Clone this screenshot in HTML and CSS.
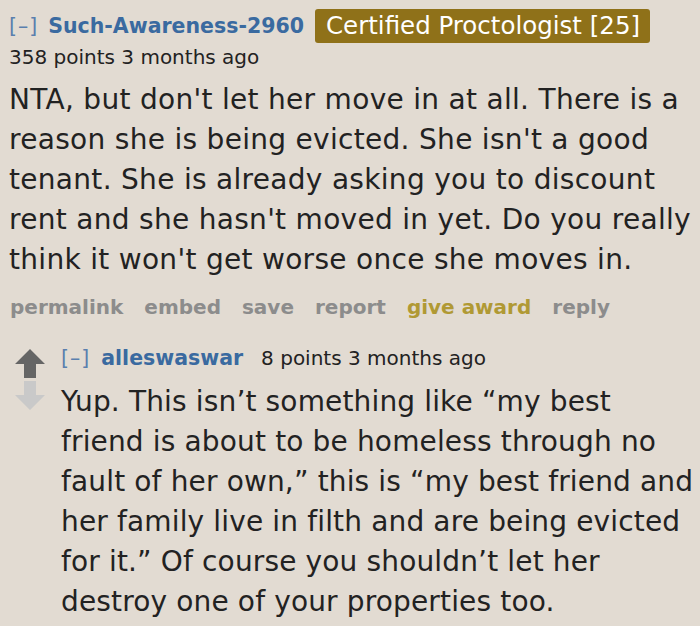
FILE: index.html
```html
<!DOCTYPE html>
<html lang="en">
<head>
    <meta charset="UTF-8">
    <meta name="viewport" content="width=device-width, initial-scale=1.0">
    <title>Comment</title>
    <link rel="stylesheet" href="styles.css">
</head>
<body>
    <div class="comment">
        <div class="tagline">
            <span class="expand">[&ndash;]</span>
            <a class="author" href="#">Such-Awareness-2960</a>
            <span class="flair">Certified Proctologist [25]</span>
        </div>
        <div class="meta">358 points 3 months ago</div>
        <div class="md">
            <p>NTA, but don't let her move in at all. There is a reason she is being evicted. She isn't a good tenant. She is already asking you to discount rent and she hasn't moved in yet. Do you really think it won't get worse once she moves in.</p>
        </div>
        <ul class="buttons">
            <li><a href="#">permalink</a></li>
            <li><a href="#">embed</a></li>
            <li><a href="#">save</a></li>
            <li><a href="#">report</a></li>
            <li><a href="#" class="award">give award</a></li>
            <li><a href="#">reply</a></li>
        </ul>

        <div class="child">
            <div class="arrows">
                <svg class="arrow" width="30" height="29" viewBox="0 0 30 29">
                    <polygon points="15,0 30,15 21,15 21,29 9,29 9,15 0,15" fill="#656565"/>
                </svg>
                <svg class="arrow" width="30" height="29" viewBox="0 0 30 29">
                    <polygon points="9,0 21,0 21,14 30,14 15,29 0,14 9,14" fill="#c9c9c9"/>
                </svg>
            </div>
            <div class="entry">
                <div class="tagline small">
                    <span class="expand">[&ndash;]</span>
                    <a class="author" href="#">alleswaswar</a>
                    <span class="points">8 points 3 months ago</span>
                </div>
                <div class="md">
                    <p>Yup. This isn&rsquo;t something like &ldquo;my best friend is about to be homeless through no fault of her own,&rdquo; this is &ldquo;my best friend and her family live in filth and are being evicted for it.&rdquo; Of course you shouldn&rsquo;t let her destroy one of your properties too.</p>
                </div>
            </div>
        </div>
    </div>
</body>
</html>
```

FILE: styles.css
```css
body {
    margin: 0;
    padding: 0;
    background-color: #e2dbd2;
    font-family: "DejaVu Sans", Verdana, sans-serif;
    color: #222;
}
a {
    text-decoration: none;
}
.comment {
    padding: 9px 0 0 9px;
}
.tagline {
    display: flex;
    align-items: center;
    font-size: 20.5px;
    height: 34px;
}
.expand {
    color: #5a7fae;
    margin-right: 10px;
    letter-spacing: 1px;
}
.author {
    color: #3a6aa0;
    font-weight: bold;
}
.flair {
    background-color: #8f7119;
    color: #fff;
    border-radius: 3px;
    padding: 0 10px 0 11px;
    margin-left: 11px;
    font-size: 24.5px;
    height: 34px;
    line-height: 34px;
}
.meta {
    font-size: 20px;
    line-height: 28px;
}
.md p {
    margin: 0;
    font-size: 28px;
    line-height: 40px;
    letter-spacing: 0.3px;
}
.comment > .md {
    padding-top: 9px;
    padding-right: 2px;
}
.buttons {
    list-style: none;
    margin: 12px 0 0 1px;
    padding: 0;
    display: flex;
    gap: 21px;
    font-size: 20px;
    font-weight: bold;
    line-height: 30px;
}
.buttons a {
    color: #8c8c8c;
}
.buttons a.award {
    color: #b09934;
}
.child {
    display: flex;
    margin-top: 20px;
}
.arrows {
    display: flex;
    flex-direction: column;
    gap: 3px;
    padding: 7px 0 0 6px;
    width: 46px;
}
.entry {
    flex: 1;
}
.entry .md p {
    letter-spacing: 0.15px;
}
.tagline.small {
    height: 32px;
    margin-bottom: 8px;
}
.tagline.small .expand {
    margin-right: 11px;
}
.points {
    font-size: 20px;
    margin-left: 18px;
}
```
